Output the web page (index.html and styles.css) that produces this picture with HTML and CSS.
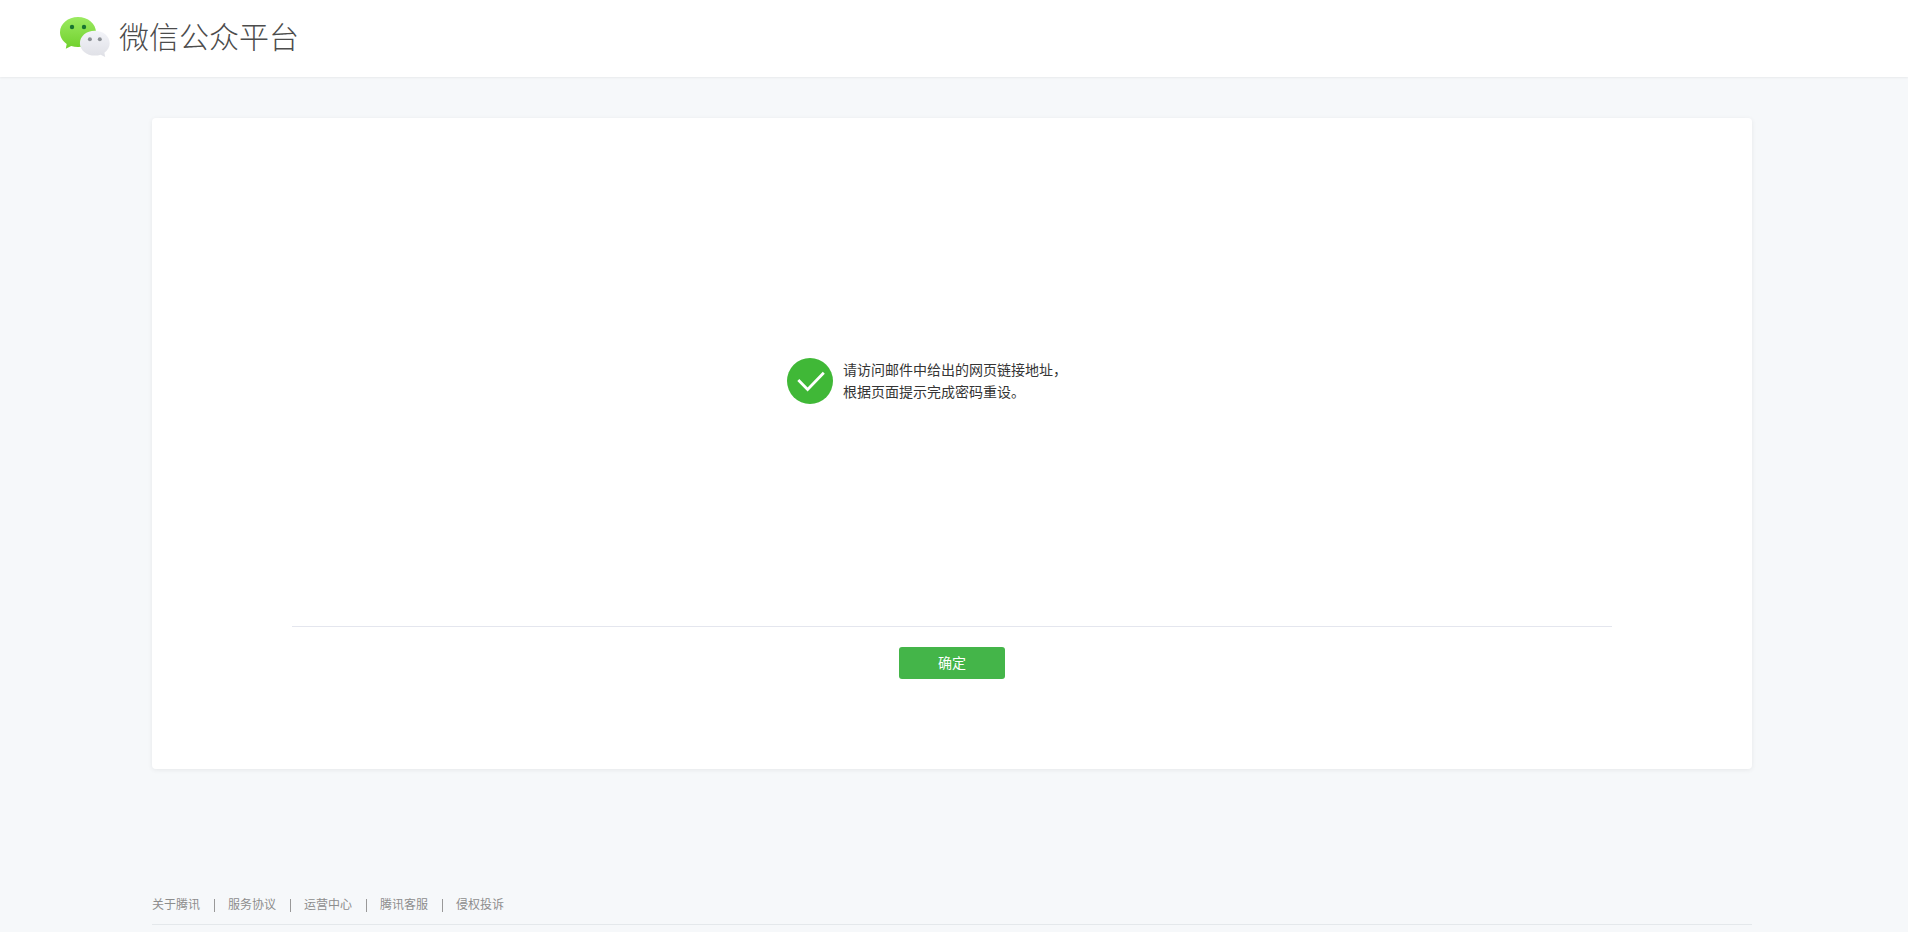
FILE: index.html
```html
<!DOCTYPE html>
<html lang="zh-CN">
<head>
<meta charset="utf-8">
<title>微信公众平台</title>
<link rel="stylesheet" href="styles.css">
</head>
<body>
<header class="header">
  <a class="brand" href="#">
    <svg class="brand-icon" viewBox="0 0 50 40" aria-hidden="true">
      <defs>
        <linearGradient id="green" x1="0" y1="0" x2="0" y2="1">
          <stop offset="0" stop-color="#9bea61"/>
          <stop offset="1" stop-color="#70d02c"/>
        </linearGradient>
        <linearGradient id="grey" x1="0" y1="0" x2="0" y2="1">
          <stop offset="0" stop-color="#f3f4f9"/>
          <stop offset="1" stop-color="#dfe0e6"/>
        </linearGradient>
      </defs>
      <path fill="url(#green)" d="M18 0C8 0 0 6.700 0 15.200c0 4.800 2.600 8.900 6.700 11.700L5.800 31.800l5.400-2.900c2.100.7 4.300 1.100 6.800 1.100 10 0 18-6.500 18-14.800S28 0 18 0z"/>
      <path fill="url(#grey)" d="M34.800 13.800c8.300 0 14.900 5.500 14.900 12.400 0 3.800-2 7.200-5.300 9.500l.8 4.300-4.600-2.300c-1.800.6-3.700.9-5.800.9-8.300 0-14.900-5.500-14.900-12.400s6.600-12.400 14.900-12.400z"/>
      <circle cx="12" cy="10" r="2.200" fill="#187331"/>
      <circle cx="24" cy="10" r="2.200" fill="#187331"/>
      <circle cx="29.900" cy="22.200" r="2" fill="#8b8f95"/>
      <circle cx="39.800" cy="22.200" r="2" fill="#8b8f95"/>
    </svg>
    <span class="brand-name">微信公众平台</span>
  </a>
</header>
<div class="page">
  <main class="card">
    <div class="message">
      <svg class="message-icon" viewBox="0 0 46 46" aria-hidden="true">
        <circle cx="23" cy="23" r="23" fill="#40b837"/>
        <path d="M11.300 22l9.300 9.400L36.800 14.700" fill="none" stroke="#fff" stroke-width="2.800"/>
      </svg>
      <p class="message-text">请访问邮件中给出的网页链接地址，<br>根据页面提示完成密码重设。</p>
    </div>
    <div class="actions">
      <button class="confirm" type="button">确定</button>
    </div>
  </main>
  <footer class="footer">
    <ul class="links">
      <li><a href="#">关于腾讯</a></li>
      <li><a href="#">服务协议</a></li>
      <li><a href="#">运营中心</a></li>
      <li><a href="#">腾讯客服</a></li>
      <li><a href="#">侵权投诉</a></li>
    </ul>
  </footer>
</div>
</body>
</html>
```
FILE: styles.css
```css
* {
  box-sizing: border-box;
}

body {
  margin: 0;
  background: #f6f8fa;
  color: #353535;
  font: 14px/22px "Noto Sans CJK SC", sans-serif;
}

.header {
  height: 77px;
  padding: 17px 60px 0;
  background: #fff;
  box-shadow: 0 1px 2px rgba(0, 0, 0, 0.06);
}

.brand {
  display: inline-flex;
  gap: 9px;
  color: #4c4c4c;
  text-decoration: none;
}

.brand-icon {
  width: 50px;
  height: 40px;
}

.brand-name {
  font-size: 30px;
  font-weight: 300;
  line-height: 36px;
}

.page {
  padding: 41px 156px 0 152px;
}

.card {
  padding: 240px 140px 90px;
  background: #fff;
  border-radius: 4px;
  box-shadow: 0 1px 5px rgba(0, 0, 0, 0.07);
}

.message {
  display: flex;
  justify-content: center;
  gap: 10px;
  padding: 0 50px 222px 0;
}

.message-icon {
  flex: none;
  width: 46px;
  height: 46px;
}

.message-text {
  margin: 0;
}

.actions {
  display: flex;
  justify-content: center;
  padding-top: 20px;
  border-top: 1px solid #e4e6ee;
}

.confirm {
  width: 106px;
  height: 32px;
  padding: 0 0 2px;
  border: 0;
  border-radius: 3px;
  background: #44b549;
  color: #fff;
  font: inherit;
}

.footer {
  margin-top: 126px;
  padding-bottom: 7px;
}

.links {
  display: flex;
  margin: 0;
  padding: 0 0 11px;
  border-bottom: 1px solid #e4e8eb;
  list-style: none;
  font-size: 12px;
  line-height: 18px;
}

.links li + li::before {
  content: "";
  display: inline-block;
  width: 1px;
  height: 13px;
  margin: 0 13px 0 14px;
  background: #999;
  vertical-align: -3px;
}

.links a {
  color: #8d8d8d;
  text-decoration: none;
}
```
